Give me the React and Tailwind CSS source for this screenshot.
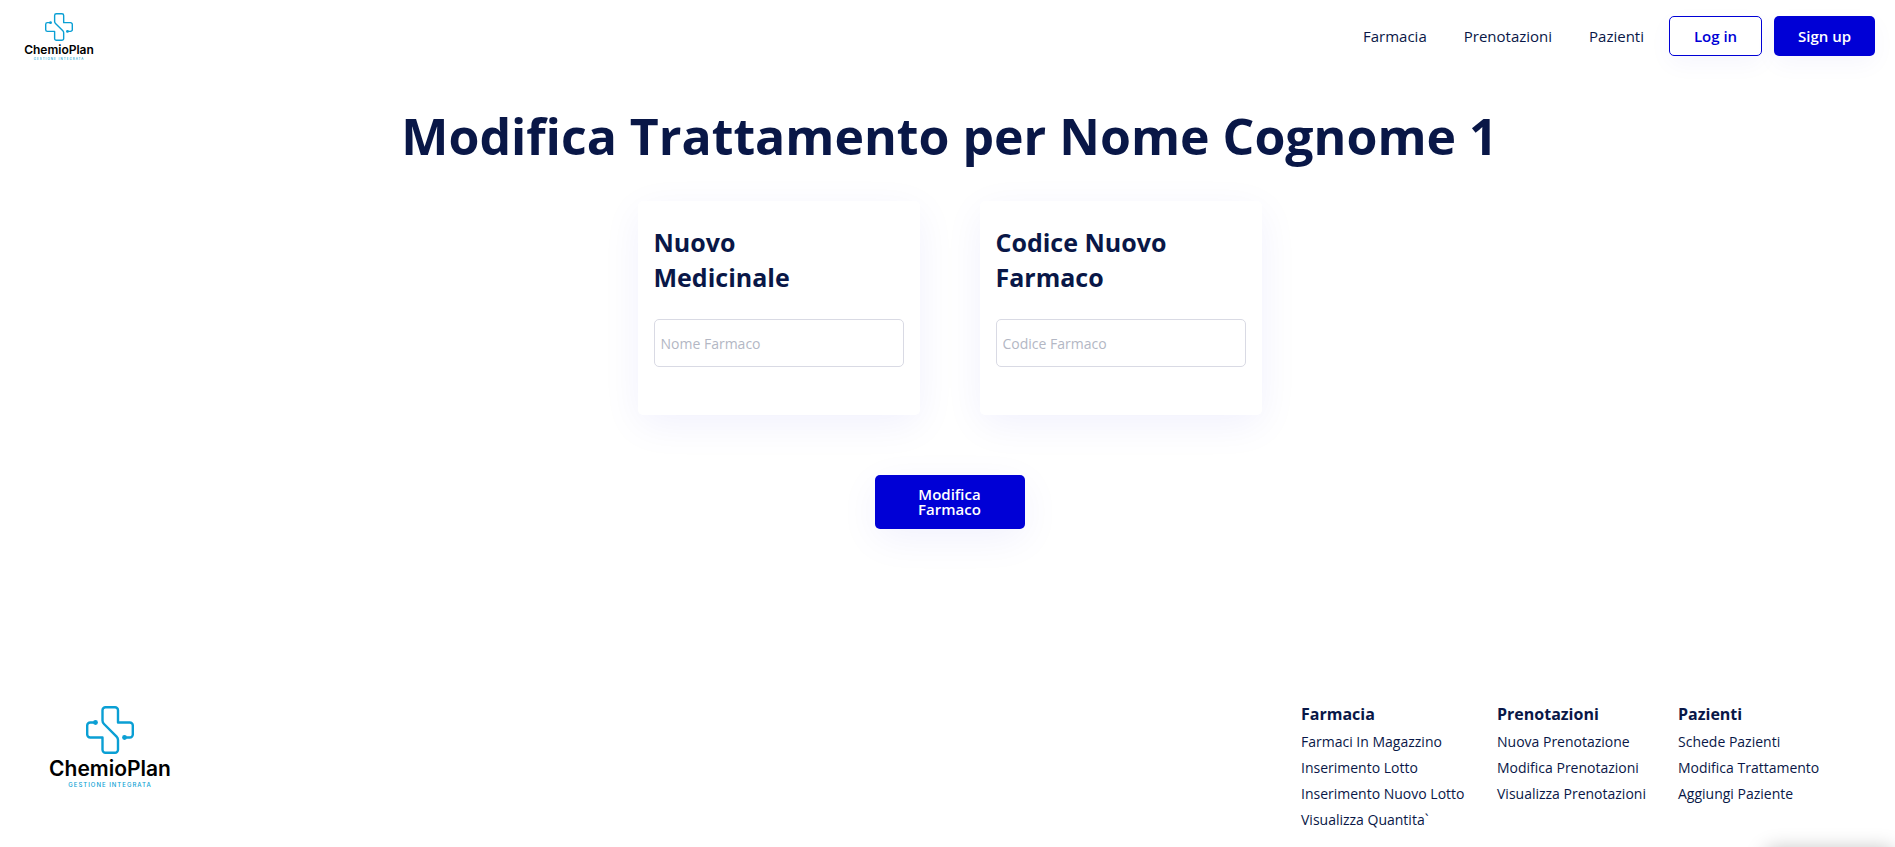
const navLinks = ["Farmacia", "Prenotazioni", "Pazienti"];

const fields = [
  { id: "nome", title: "Nuovo Medicinale", placeholder: "Nome Farmaco" },
  { id: "codice", title: "Codice Nuovo Farmaco", placeholder: "Codice Farmaco" },
];

const footerColumns = [
  {
    title: "Farmacia",
    width: "w-[196px]",
    links: ["Farmaci In Magazzino", "Inserimento Lotto", "Inserimento Nuovo Lotto", "Visualizza Quantita`"],
  },
  {
    title: "Prenotazioni",
    width: "w-[181px]",
    links: ["Nuova Prenotazione", "Modifica Prenotazioni", "Visualizza Prenotazioni"],
  },
  {
    title: "Pazienti",
    width: "w-[169px]",
    links: ["Schede Pazienti", "Modifica Trattamento", "Aggiungi Paziente"],
  },
];

function CrossMark({ className }) {
  return (
    <svg viewBox="0 0 48 48" className={className} fill="none" stroke="#0a9fd4" strokeWidth="2.4" strokeLinejoin="round" aria-hidden="true">
      <path d="M9 16.500H4.200a3 3 0 0 0-3 3V28.500a3 3 0 0 0 3 3H16.500V43.800a3 3 0 0 0 3 3H29a3 3 0 0 0 3-3V34q0-2-1.400-3.400L18 18q-1.500-1.500-1.500-3.500V4.200a3 3 0 0 1 3-3H29a3 3 0 0 1 3 3V16.500H43.800a3 3 0 0 1 3 3V28.500a3 3 0 0 1-3 3H39" />
      <circle cx="9.500" cy="16.500" r="2.400" fill="#0a9fd4" stroke="none" />
      <circle cx="38.500" cy="31.500" r="2.400" fill="#0a9fd4" stroke="none" />
    </svg>
  );
}

function HeaderLogo() {
  return (
    <a href="#" className="flex w-[70px] flex-col items-center pt-[1px] font-['Inter',sans-serif]">
      <CrossMark className="size-7" />
      <span className="mt-[2px] text-[12px] leading-[14px] font-semibold text-black">ChemioPlan</span>
      <span className="text-[3px] leading-[4px] font-medium tracking-[1px] whitespace-nowrap text-[#0a9fd4]">GESTIONE INTEGRATA</span>
    </a>
  );
}

function FooterLogo() {
  return (
    <a href="#" className="flex w-[124px] flex-col items-center pt-[2px] font-['Inter',sans-serif]">
      <CrossMark className="size-12" />
      <span className="mt-[3px] text-[21px] leading-6 font-semibold text-black">ChemioPlan</span>
      <span className="text-[6px] leading-[8px] font-medium tracking-[1px] whitespace-nowrap text-[#0a9fd4]">GESTIONE INTEGRATA</span>
    </a>
  );
}

export default function App() {
  return (
    <div className="flex min-h-screen flex-col overflow-x-hidden bg-white font-['Open_Sans',sans-serif] text-[#091747]">
      <header className="flex items-start justify-between pt-3 pr-5 pl-6">
        <HeaderLogo />
        <div className="flex items-center gap-[25px] pt-1">
          <nav className="flex gap-[37px] text-[15px] leading-10">
            {navLinks.map((label) => (
              <a key={label} href="#">{label}</a>
            ))}
          </nav>
          <div className="flex gap-3 text-[15px] font-semibold">
            <button type="button" className="h-10 w-[93px] rounded-[5px] border border-[#0000d6] bg-white text-[#0000d6] shadow-[0_8px_24px_rgba(0,0,214,0.04)]">Log in</button>
            <button type="button" className="h-10 w-[101px] rounded-[5px] bg-[#0000d6] text-white shadow-[0_8px_24px_rgba(0,0,214,0.04)]">Sign up</button>
          </div>
        </div>
      </header>

      <main className="flex grow flex-col items-center">
        <h1 className="mt-9 pl-1 text-center text-[50px] leading-[78px] font-bold">Modifica Trattamento per Nome Cognome 1</h1>
        <form className="mt-[26px] flex flex-col items-center pl-1" onSubmit={(e) => e.preventDefault()}>
          <div className="flex flex-wrap justify-center gap-[60px]">
            {fields.map((f) => (
              <div key={f.id} className="w-[282px] rounded-[5px] bg-white px-4 pt-6 pb-12 shadow-[0_10px_40px_rgba(0,0,214,0.06)]">
                <label htmlFor={f.id} className="block w-[180px] text-[25px] leading-[35px] font-bold">{f.title}</label>
                <input
                  id={f.id}
                  type="text"
                  placeholder={f.placeholder}
                  className="mt-6 h-12 w-full rounded-[5px] border border-[#d9dae4] px-[6px] text-[14px] outline-none placeholder:text-[#b3b7c4]"
                />
              </div>
            ))}
          </div>
          <button type="submit" className="mt-[60px] w-[150px] rounded-[5px] bg-[#0000d6] px-10 py-3 text-[15px] leading-[15px] font-semibold text-white shadow-[0_10px_40px_rgba(0,0,214,0.06)]">
            Modifica Farmaco
          </button>
        </form>
      </main>

      <footer className="flex items-start justify-between pr-12 pb-[14px] pl-12">
        <FooterLogo />
        <div className="flex">
          {footerColumns.map((col) => (
            <section key={col.title} className={col.width}>
              <h2 className="text-[16px] leading-5 font-bold">{col.title}</h2>
              <ul className="mt-[5px] text-[14px] leading-[26px]">
                {col.links.map((label) => (
                  <li key={label}><a href="#" className="whitespace-nowrap">{label}</a></li>
                ))}
              </ul>
            </section>
          ))}
        </div>
      </footer>
      <div className="fixed right-0 -bottom-[42px] h-10 w-[130px] rounded-[10px] shadow-[0_0_20px_rgba(0,0,0,0.25)]" />
    </div>
  );
}
